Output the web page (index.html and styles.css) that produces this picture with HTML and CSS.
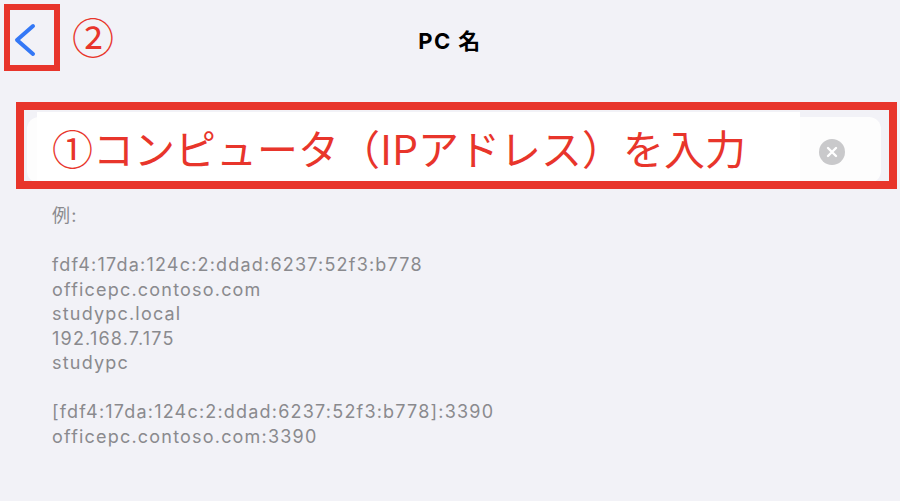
FILE: index.html
```html
<!DOCTYPE html>
<html lang="ja">
<head>
    <meta charset="UTF-8">
    <meta name="viewport" content="width=device-width, initial-scale=1.0">
    <title>PC 名</title>
    <link rel="stylesheet" href="styles.css">
</head>
<body>
    <header class="nav">
        <div class="nav-left">
            <button class="back-btn" aria-label="戻る">
                <svg width="44" height="55" viewBox="0 0 44 55">
                    <path d="M23 16 L7 30 L23 44" fill="none" stroke="#3478f6" stroke-width="4" stroke-linecap="round" stroke-linejoin="round"/>
                </svg>
            </button>
            <span class="mark mark-nav">②</span>
        </div>
        <h1 class="nav-title">PC 名</h1>
        <div class="nav-right"></div>
    </header>

    <main>
        <div class="field-frame">
            <div class="field">
                <div class="field-note">①コンピュータ（IPアドレス）を入力</div>
                <span class="clear-btn">
                    <svg width="26" height="26" viewBox="0 0 26 26">
                        <circle cx="13" cy="13" r="13" fill="#c9c9cb"/>
                        <path d="M9 9 L17 17 M17 9 L9 17" stroke="#fff" stroke-width="2.4" stroke-linecap="round"/>
                    </svg>
                </span>
            </div>
        </div>

        <div class="examples">
            <p>例:</p>
            <p>fdf4:17da:124c:2:ddad:6237:52f3:b778<br>officepc.contoso.com<br>studypc.local<br>192.168.7.175<br>studypc</p>
            <p>[fdf4:17da:124c:2:ddad:6237:52f3:b778]:3390<br>officepc.contoso.com:3390</p>
        </div>
    </main>
</body>
</html>
```

FILE: styles.css
```css
:root {
    --bg: #f2f2f7;
    --annot-red: #e8352b;
    --ios-blue: #3478f6;
    --label-gray: #8a8a8e;
}

body {
    margin: 0;
    background-color: var(--bg);
    font-family: Inter, "Noto Sans CJK JP", sans-serif;
    color: #000;
}

.nav {
    display: grid;
    grid-template-columns: 1fr auto 1fr;
    align-items: center;
    padding: 4px 0 0 4px;
    height: 67px;
}

.nav-left {
    display: flex;
    align-items: center;
    gap: 12px;
}

.back-btn {
    display: flex;
    width: 56px;
    height: 67px;
    padding: 0;
    border: 6px solid var(--annot-red);
    background: none;
    box-sizing: border-box;
}

.mark {
    color: var(--annot-red);
    font-family: "Noto Sans CJK JP", sans-serif;
    line-height: 1;
}

.mark-nav {
    font-size: 42px;
    margin-top: -4px;
}

.nav-title {
    margin: 2px 0 0;
    font-size: 22px;
    font-weight: 700;
    letter-spacing: 1.5px;
    font-family: Inter, "Noto Sans CJK JP", sans-serif;
    transform: translateX(-2px);
}

main {
    padding: 31px 3px 0 16px;
}

.field-frame {
    display: flex;
    height: 87px;
    padding: 7px 8px 0 3px;
    border: 8px solid var(--annot-red);
    box-sizing: border-box;
    overflow: hidden;
}

.field {
    position: relative;
    flex: 1;
    display: flex;
    align-items: center;
    justify-content: flex-end;
    height: 66px;
    background: #fdfdfd;
    border-radius: 12px;
}

/* pasted annotation label over the text field */
.field-note {
    position: absolute;
    left: 10px;
    top: -5px;
    width: 763px;
    height: 70px;
    padding-left: 15px;
    box-sizing: border-box;
    display: flex;
    align-items: center;
    background: #fff;
    color: var(--annot-red);
    font-family: "Noto Sans CJK JP", sans-serif;
    font-size: 41px;
    white-space: nowrap;
}

.clear-btn {
    display: flex;
    margin-right: 36px;
    margin-top: 4px;
}

.examples {
    padding: 15px 0 0 36px;
    color: var(--label-gray);
    font-size: 18px;
    line-height: 24.5px;
    letter-spacing: 1.2px;
}

.examples p {
    margin: 0 0 24.5px;
}
```
